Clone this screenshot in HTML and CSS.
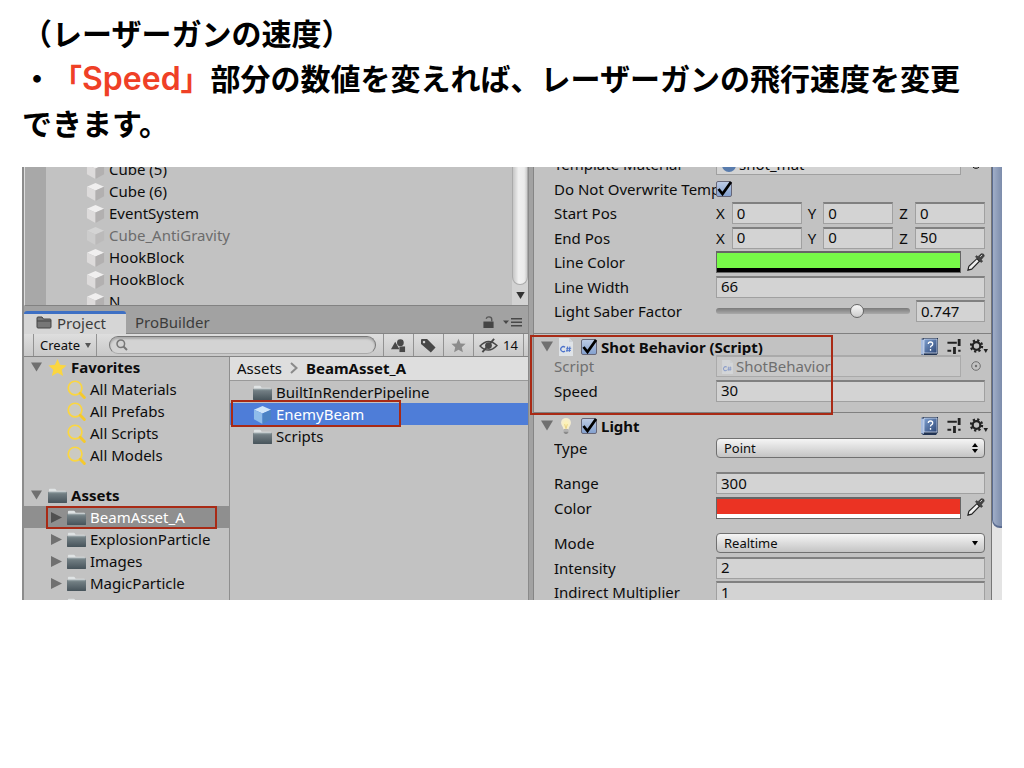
FILE: index.html
```html
<!DOCTYPE html>
<html lang="ja">
<head>
<meta charset="utf-8">
<title>レーザーガンの速度</title>
<link rel="stylesheet" href="styles.css">
</head>
<body>
<svg class="defs" aria-hidden="true">
  <defs>
    <linearGradient id="g-folder" x1="0" y1="0" x2="0" y2="1"><stop offset="0" stop-color="#7b878c"/><stop offset="1" stop-color="#46535a"/></linearGradient>
    <linearGradient id="g-book" x1="0" y1="0" x2="1" y2="1"><stop offset="0" stop-color="#7fa0d0"/><stop offset="1" stop-color="#2c4676"/></linearGradient>
    <radialGradient id="g-bulb"><stop offset="0" stop-color="#fff3b0"/><stop offset="1" stop-color="#f3ecd2"/></radialGradient>
  </defs>
  <symbol id="cube" viewBox="0 0 20 20"><path d="M1 5 10 1l9 4-9 4z" fill="#f0efef"/><path d="M1 5l9 4v11l-9-5z" fill="#dddbdb"/><path d="M19 5l-9 4v11l9-5z" fill="#b2b0b0"/></symbol>
  <symbol id="prefab" viewBox="0 0 20 20"><path d="M1 5 10 1l9 4-9 4z" fill="#cfe6fa"/><path d="M1 5l9 4v11l-9-5z" fill="#8fbdea"/><path d="M19 5l-9 4v11l9-5z" fill="#4b83c4"/></symbol>
  <symbol id="folder" viewBox="0 0 20 16"><path d="M1 4V2q0-1 1-1h5q1 0 1.500 1L9 3h9q1 0 1 1v2H1z" fill="#dfe3e4"/><path d="M0 5q0-1 1-1h18q1 0 1 1v10q0 1-1 1H1q-1 0-1-1z" fill="url(#g-folder)"/><path d="M1 5h18" stroke="#98a2a6"/></symbol>
  <symbol id="star" viewBox="0 0 20 20"><path d="M10 1l2.700 6.200 6.800.6-5.100 4.500 1.500 6.700-5.900-3.500L4.100 19l1.500-6.700L.5 7.800l6.800-.6z"/></symbol>
  <symbol id="lens" viewBox="0 0 20 20"><circle cx="8.500" cy="8.500" r="7.200" fill="#cbcac2" stroke="#fbd640" stroke-width="1.800"/><path d="M14 14l4.300 4.500" stroke="#f5c92c" stroke-width="3" stroke-linecap="round"/></symbol>
  <symbol id="down" viewBox="0 0 12 10"><path d="M0 0h12L6 10z"/></symbol>
  <symbol id="right" viewBox="0 0 12 12"><path d="M0 0l12 6-12 6z"/></symbol>
  <symbol id="check" viewBox="0 0 18 18"><path d="M3.500 9l4 5L16 2" fill="none" stroke="#000" stroke-width="2.800"/></symbol>
  <symbol id="csharp" viewBox="0 0 14 18"><path d="M0 0h10l4 4v14H0z" fill="#dfe3e7"/><path d="M10 0v4h4" fill="#cfd4da"/><path d="M6 9.300A2.500 2.500 0 1 0 6 13" fill="none" stroke="#4d73cb" stroke-width="1.300"/><path d="M8.600 8.500l-.7 5.500m3-5.500l-.7 5.500M7.200 10.300h5m-5.200 2h5" stroke="#4d73cb" fill="none"/></symbol>
  <symbol id="bulb" viewBox="0 0 14 20"><path d="M7 1a5.500 5.500 0 0 1 5.500 5.500c0 3-2.500 4-2.700 7.500H4.200C4 10.500 1.500 9.500 1.500 6.500A5.500 5.500 0 0 1 7 1z" fill="url(#g-bulb)"/><path d="M5.500 8L7 13l1.500-5" fill="none" stroke="#e6cf7a"/><path d="M4.500 14h5v3.500L8 19H6l-1.500-1.500z" fill="#8b8b8b"/><path d="M4.500 15.500h5" stroke="#ddd"/></symbol>
  <symbol id="book" viewBox="0 0 18 19"><path d="M1 2l3-1h14v15l-2 3H3l-2-2z" fill="#213352"/><path d="M1 2l3 1v15l-3-1z" fill="#a7bcdf"/><path d="M4 2h13v14H4z" fill="url(#g-book)" stroke="#dfe7f5" stroke-width=".7"/><path d="M8.300 7q0-2 2.200-2t2.200 2q0 1.200-1.300 1.800-.9.500-.9 1.700M10.500 12v1.700" fill="none" stroke="#fff" stroke-width="1.300"/></symbol>
  <symbol id="preset" viewBox="0 0 14 16"><path d="M0 4h10M0 12.500h4M11.500 12.500H14" stroke="#222" stroke-width="2.200" fill="none"/><path d="M12.500 0v7.500M7.500 8.500V16" stroke="#222" stroke-width="3" fill="none"/></symbol>
  <symbol id="gear" viewBox="0 0 18 16"><circle cx="6.500" cy="7" r="3.800" fill="none" stroke="#222" stroke-width="2.200"/><circle cx="6.500" cy="7" r="5.600" fill="none" stroke="#222" stroke-width="2.200" stroke-dasharray="2.200 2.200"/><path d="M13.500 10H18l-2.200 4z" fill="#222"/></symbol>
  <symbol id="dropper" viewBox="0 0 20 20"><path d="M2 18l1-4 8.500-8 2.700 2.700L6 17z" fill="#eee" stroke="#222" stroke-width="1.200"/><path d="M10 4l6 6 1.500-1.500-1.500-1.500 3-3.500q.6-2-1-2.500-2-.8-3 .5L12.500 4 11.200 2.700z" fill="#454545" stroke="#222" stroke-width=".6"/><path d="M15 4l2-2" stroke="#ddd"/></symbol>
  <symbol id="picker" viewBox="0 0 10 10"><circle cx="5" cy="5" r="4.300" fill="none" stroke="currentColor"/><circle cx="5" cy="5" r="1.200" fill="currentColor"/></symbol>
</svg>

<h1 class="lesson">（レーザーガンの速度）<br>・<em>「<span class="latin">Speed</span>」</em>部分の数値を変えれば、レーザーガンの飛行速度を変更できます。</h1>

<main class="editor">
  <section class="left">
    <div class="hierarchy">
      <ul class="objects">
        <li><svg><use href="#cube"/></svg>Cube (5)</li>
        <li><svg><use href="#cube"/></svg>Cube (6)</li>
        <li><svg><use href="#cube"/></svg>EventSystem</li>
        <li class="inactive"><svg><use href="#cube"/></svg>Cube_AntiGravity</li>
        <li><svg><use href="#cube"/></svg>HookBlock</li>
        <li><svg><use href="#cube"/></svg>HookBlock</li>
        <li><svg><use href="#cube"/></svg>N</li>
      </ul>
      <div class="vscroll"><span class="vthumb"></span><button class="vdown" aria-label="Scroll down"><svg><use href="#down"/></svg></button></div>
    </div>

    <nav class="tabs">
      <button class="tab active"><svg class="tab-icon" viewBox="0 0 16 13"><path d="M1 4V2q0-1 1-1h4l1.500 2H14q1 0 1 1v7q0 1-1 1H2q-1 0-1-1z" fill="#777" stroke="#444"/><path d="M1 5h14" stroke="#444"/></svg>Project</button>
      <button class="tab">ProBuilder</button>
      <button class="lock" aria-label="Lock"><svg viewBox="0 0 11 13"><path d="M0 6h11v7H0z" fill="#454545"/><path d="M9 6V3.500Q9 1 6 1 3.500 1 3 3" fill="none" stroke="#555" stroke-width="1.500"/></svg></button>
      <button class="menu" aria-label="Panel menu"><svg viewBox="0 0 19 9"><path d="M0 2.500h6L3 6zM8 0h11v1.500H8zm0 3.500h11V5H8zM8 7h11v1.500H8z" fill="#484848"/></svg></button>
    </nav>

    <div class="toolbar">
      <button class="create">Create <svg><use href="#down"/></svg></button>
      <label class="search"><svg viewBox="0 0 12 12"><circle cx="4.800" cy="4.800" r="3.800" fill="none" stroke="#777" stroke-width="1.500"/><path d="M7.500 7.500L11 11" stroke="#777" stroke-width="2"/></svg><input type="search" aria-label="Search"></label>
      <button class="tool" aria-label="Filter by type"><svg viewBox="0 0 16 16"><circle cx="10" cy="5" r="3.600"/><path d="M0 12L4.500 4 9 12z"/><path d="M9 9h6v6H9z"/></svg></button>
      <button class="tool" aria-label="Filter by label"><svg viewBox="0 0 16 16"><path fill-rule="evenodd" d="M0 2q0-1 1-1h5.500l9 9-5 5.500L0 6.500zM3.200 3a1.300 1.300 0 1 0 .1 0z"/></svg></button>
      <button class="tool faded" aria-label="Save search"><svg><use href="#star"/></svg></button>
      <button class="tool hidden-count" aria-label="Hidden packages"><svg viewBox="0 0 20 16"><path d="M1 8.500Q10-1 19 8q-9 9.500-18 .5z" fill="none" stroke="#484848" stroke-width="1.600"/><circle cx="10" cy="8" r="3.600"/><path d="M3.500 15L16 1" stroke="#484848" stroke-width="2"/></svg>14</button>
    </div>

    <div class="project">
      <div class="tree">
        <ul class="rows">
          <li class="root"><svg class="fold"><use href="#down"/></svg><svg class="icon gold"><use href="#star"/></svg>Favorites</li>
          <li class="leaf"><svg class="icon"><use href="#lens"/></svg>All Materials</li>
          <li class="leaf"><svg class="icon"><use href="#lens"/></svg>All Prefabs</li>
          <li class="leaf"><svg class="icon"><use href="#lens"/></svg>All Scripts</li>
          <li class="leaf"><svg class="icon"><use href="#lens"/></svg>All Models</li>
        </ul>
        <ul class="rows">
          <li class="root"><svg class="fold"><use href="#down"/></svg><svg class="icon"><use href="#folder"/></svg>Assets</li>
          <li class="branch selected"><svg class="fold"><use href="#right"/></svg><svg class="icon"><use href="#folder"/></svg>BeamAsset_A<span class="mark mark-folder"></span></li>
          <li class="branch"><svg class="fold"><use href="#right"/></svg><svg class="icon"><use href="#folder"/></svg>ExplosionParticle</li>
          <li class="branch"><svg class="fold"><use href="#right"/></svg><svg class="icon"><use href="#folder"/></svg>Images</li>
          <li class="branch"><svg class="fold"><use href="#right"/></svg><svg class="icon"><use href="#folder"/></svg>MagicParticle</li>
          <li class="branch"><svg class="fold"><use href="#right"/></svg><svg class="icon"><use href="#folder"/></svg>Prefabs</li>
        </ul>
      </div>
      <div class="browser">
        <div class="crumbs"><span>Assets</span><svg viewBox="0 0 8 12"><path d="M1 1l5.500 5L1 11" fill="none" stroke="#8a8a8a" stroke-width="2"/></svg><b>BeamAsset_A</b></div>
        <ul class="files">
          <li><svg class="icon"><use href="#folder"/></svg>BuiltInRenderPipeline</li>
          <li class="picked"><svg class="icon"><use href="#prefab"/></svg>EnemyBeam<span class="mark mark-file"></span></li>
          <li><svg class="icon"><use href="#folder"/></svg>Scripts</li>
        </ul>
      </div>
    </div>
  </section>

  <section class="inspector">
    <div class="components">
      <div class="component scrolled">
        <div class="row"><label for="mat">Template Material</label><span class="object"><span class="ball"></span><input id="mat" value="shot_mat" readonly></span><button class="pick" aria-label="Pick material"><svg><use href="#picker"/></svg></button></div>
        <div class="row"><label for="over">Do Not Overwrite Template</label><span class="tick"><input type="checkbox" id="over" checked><svg><use href="#check"/></svg></span></div>
        <div class="row"><span class="name">Start Pos</span><span class="vector"><label>X<input value="0"></label><label>Y<input value="0"></label><label>Z<input value="0"></label></span></div>
        <div class="row"><span class="name">End Pos</span><span class="vector"><label>X<input value="0"></label><label>Y<input value="0"></label><label>Z<input value="50"></label></span></div>
        <div class="row"><span class="name">Line Color</span><button class="swatch green" aria-label="Line Color"></button><button class="drop" aria-label="Pick color"><svg><use href="#dropper"/></svg></button></div>
        <div class="row"><label for="lw">Line Width</label><input id="lw" class="field" value="66"></div>
        <div class="row"><label for="lsf">Light Saber Factor</label><input type="range" id="lsf" min="0" max="1" step="0.001" value="0.747"><input class="field factor" aria-label="Light Saber Factor value" value="0.747"></div>
      </div>

      <div class="component">
        <span class="mark mark-script"></span>
        <div class="head"><svg class="fold"><use href="#down"/></svg><svg class="kind"><use href="#csharp"/></svg><span class="tick"><input type="checkbox" id="shot" checked><svg><use href="#check"/></svg></span><label for="shot">Shot Behavior (Script)</label><button aria-label="Help"><svg class="book"><use href="#book"/></svg></button><button aria-label="Presets"><svg class="preset"><use href="#preset"/></svg></button><button aria-label="Options"><svg class="gear"><use href="#gear"/></svg></button></div>
        <div class="row disabled"><label for="scr">Script</label><span class="object"><svg class="doc"><use href="#csharp"/></svg><input id="scr" value="ShotBehavior" readonly></span><button class="pick" aria-label="Pick script"><svg><use href="#picker"/></svg></button></div>
        <div class="row"><label for="spd">Speed</label><input id="spd" class="field" value="30"></div>
      </div>

      <div class="component">
        <div class="head"><svg class="fold"><use href="#down"/></svg><svg class="kind"><use href="#bulb"/></svg><span class="tick"><input type="checkbox" id="light" checked><svg><use href="#check"/></svg></span><label for="light">Light</label><button aria-label="Help"><svg class="book"><use href="#book"/></svg></button><button aria-label="Presets"><svg class="preset"><use href="#preset"/></svg></button><button aria-label="Options"><svg class="gear"><use href="#gear"/></svg></button></div>
        <div class="group first">
          <div class="row"><label for="type">Type</label><span class="choice"><select id="type"><option>Point</option></select><svg viewBox="0 0 6 10"><path d="M3 0l3 4H0zM0 6h6l-3 4z"/></svg></span></div>
        </div>
        <div class="group">
          <div class="row"><label for="range">Range</label><input id="range" class="field" value="300"></div>
          <div class="row"><span class="name">Color</span><button class="swatch red" aria-label="Color"></button><button class="drop" aria-label="Pick color"><svg><use href="#dropper"/></svg></button></div>
        </div>
        <div class="group">
          <div class="row"><label for="mode">Mode</label><span class="choice"><select id="mode"><option>Realtime</option></select><svg viewBox="0 0 6 10"><path d="M0 3h6L3 7.500z"/></svg></span></div>
          <div class="row"><label for="int">Intensity</label><input id="int" class="field" value="2"></div>
          <div class="row"><label for="ind">Indirect Multiplier</label><input id="ind" class="field" value="1"></div>
        </div>
      </div>
    </div>
    <div class="side-scroll"><span></span></div>
  </section>
</main>
</body>
</html>
```

FILE: styles.css
```css
* { box-sizing: border-box; }

body {
  margin: 0;
  padding: 10px 22px;
  background: #fff;
  color: #0c0c0c;
  font-family: "Noto Sans", "Open Sans", sans-serif;
  font-size: 15px;
  line-height: 22px;
}

ul { list-style: none; margin: 0; padding: 0; }
svg { display: block; flex: none; overflow: visible; }
button, input, select { font: inherit; color: inherit; margin: 0; padding: 0; border: 0; background: none; border-radius: 0; min-width: 0; }
.defs { position: absolute; width: 0; height: 0; }

.lesson {
  margin: 0 0 22px;
  padding-right: 36px;
  color: #000;
  font: bold 30px/45px "Noto Sans CJK JP", sans-serif;
  text-spacing-trim: space-all;
}
.lesson em { color: #ef4026; font-style: normal; }
.latin { font-family: Inter, sans-serif; font-size: 32px; font-weight: 600; line-height: 1; }

.editor {
  display: grid;
  grid-template-columns: 507fr 473fr;
  aspect-ratio: 980 / 433;
  overflow: hidden;
  background: #c2c2c2;
}

.mark { position: absolute; border: 2px solid #a92a15; pointer-events: none; z-index: 2; }

/* Left column */
.left { display: flex; flex-direction: column; min-width: 0; min-height: 0; overflow: hidden; border-left: 2px solid #8c8c8c; border-right: 1px solid #8a8a8a; }

.hierarchy { display: flex; flex: none; height: 139px; overflow: hidden; border-left: 1px solid #ddd; border-bottom: 1px solid #828282; }
.objects { flex: 1; margin-top: -9px; border-left: 21px solid #a8a8a8; padding-left: 40px; }
.objects li { display: flex; align-items: center; gap: 4px; height: 22px; }
.objects svg { width: 19px; height: 19px; }
.inactive { color: #6c6c6c; }
.inactive svg { opacity: .4; }
.vscroll { display: flex; flex-direction: column; width: 16px; background: #d2d2d2; }
.vthumb { flex: 1; border: 1px solid #aaa; border-top: 0; border-radius: 0 0 8px 8px; background: linear-gradient(90deg, #c6c6c6, #f0f0f0 40%, #ececec 80%, #ccc); }
.vdown { display: flex; align-items: center; justify-content: center; height: 20px; }
.vdown svg { width: 9px; height: 7px; fill: #333; }

.tabs { display: flex; flex: none; align-items: flex-end; height: 28px; background: #a2a2a2; border-bottom: 1px solid #858585; color: #3c3c3c; }
.tab { height: 22px; padding: 0 9px; line-height: 20px; }
.tab.active { display: flex; align-items: center; gap: 5px; height: 23px; padding: 0 20px 3px 12px; margin-bottom: -1px; border-top: 3px solid #3e70c4; border-radius: 3px 3px 0 0; background: #d6d6d6; }
.tab-icon { width: 16px; height: 13px; }
.lock { margin-left: auto; padding: 0 9px 5px 0; }
.lock svg { width: 11px; height: 12px; }
.menu { padding: 0 6px 6px 0; }
.menu svg { width: 19px; height: 9px; }

.toolbar { display: flex; flex: none; align-items: stretch; height: 23px; padding: 0 4px 0 9px; border-bottom: 1px solid #858585; background: linear-gradient(#dedede, #c8c8c8); }
.create { display: flex; align-items: center; gap: 5px; padding: 0 5px 0 6px; border: solid #929292; border-width: 0 1px; font-size: 13px; }
.create svg { width: 6px; height: 5px; fill: #555; }
.search { display: flex; flex: 1; align-items: center; gap: 4px; margin: 2px 7px 2px 12px; padding: 0 6px; border: 1px solid #777; border-bottom-color: #aaa; border-radius: 10px; background: #d3d3d3; box-shadow: inset 0 2px 2px #aaa; }
.search svg { width: 12px; height: 12px; }
.search input { flex: 1; outline: 0; appearance: none; height: 16px; }
.tool { display: flex; align-items: center; justify-content: center; width: 30px; border-left: 1px solid #929292; }
.tool svg { width: 15px; height: 15px; fill: #484848; }
.tool.faded svg { fill: #8c8c8c; }
.tool.hidden-count { gap: 5px; width: 51px; border-right: 1px solid #929292; font-size: 13px; }
.hidden-count svg { width: 19px; }

.project { display: grid; grid-template-columns: 206fr 298fr; flex: 1; min-height: 0; }
.tree { min-width: 0; border-right: 1px solid #8f8f8f; overflow: hidden; }
.rows:first-child { margin-top: -1px; }
.rows + .rows { margin-top: 18px; }
.rows li { display: flex; align-items: center; position: relative; height: 22px; gap: 4px; white-space: nowrap; }
.icon { width: 19px; height: 19px; }
.gold { fill: #fbd640; }
.fold { fill: #707070; width: 11px; height: 10px; }
.root { padding-left: 7px; font-weight: bold; }
.root .fold { margin-right: 2px; }
.leaf { padding-left: 43px; }
.branch { padding-left: 27px; }
.branch .fold { margin-right: 1px; height: 11px; }
.rows .selected { background: #8f8f8f; color: #fff; }
.selected .fold { fill: #505050; }
.mark-folder { inset: 0 12px -1px 22px; }

.browser { min-width: 0; }
.crumbs { display: flex; align-items: center; gap: 8px; height: 24px; padding: 0 7px 2px; border-bottom: 1px solid #999; background: #dedede; }
.crumbs svg { width: 8px; height: 12px; }
.files li { display: flex; align-items: center; gap: 4px; position: relative; height: 22px; padding-left: 23px; }
.picked { background: #4e7dd8; color: #fff; }
.mark-file { left: 1px; right: 127px; top: -3px; bottom: -2px; }

/* Inspector */
.inspector { display: flex; min-width: 0; min-height: 0; border-left: 4px solid #a2a2a2; }
.components { flex: 1; min-width: 0; border-left: 1px solid #858585; }
.component { position: relative; padding-bottom: 9px; border-bottom: 1px solid #808080; }
.scrolled { margin-top: -15px; padding-bottom: 10px; }
.row { display: flex; align-items: center; height: 24px; padding: 0 6px 0 20px; white-space: nowrap; }
.row:nth-child(even) { height: 25px; }
.row > label, .name { flex: none; width: 162px; overflow: hidden; }
.field, .vector input, .object { height: 22px; border: 1px solid #a0a0a0; border-top: 2px solid #808080; background: #d3d3d3; }
.field { flex: 1; padding: 0 4px 2px; }
.object { display: flex; flex: 1; align-items: center; gap: 3px; padding: 0 5px; min-width: 0; }
.object input { flex: 1; height: 18px; padding-bottom: 2px; }
.ball { width: 14px; height: 14px; border-radius: 50%; background: #597cad; }
.doc { width: 11px; height: 14px; opacity: .5; }
.pick, .drop { display: flex; align-items: center; justify-content: center; width: 24px; }
.pick { padding-left: 6px; }
.pick svg { width: 10px; height: 10px; }
.drop { padding-left: 4px; }
.drop svg { width: 19px; height: 19px; }
.vector { display: grid; flex: 1; grid-template-columns: repeat(3, 1fr); gap: 6px; min-width: 0; }
.vector label { display: flex; align-items: center; min-width: 0; }
.vector input { flex: 1; margin-left: 7px; padding: 0 4px 2px; width: 0; }
.swatch { flex: 1; height: 22px; border: 1px solid #666; border-top: 2px solid #666; }
.green { background: linear-gradient(#77fa48 15px, #000 15px); }
.red { background: linear-gradient(#eb3323 15px, #fff 15px); }

input[type="range"] { flex: 1; appearance: none; height: 14px; margin-right: 6px; }
input[type="range"]::-webkit-slider-runnable-track { height: 6px; border-radius: 3px; background: linear-gradient(#7a7a7a, #aaa); }
input[type="range"]::-webkit-slider-thumb { appearance: none; width: 14px; height: 14px; margin-top: -4px; border: 1px solid #666; border-radius: 50%; background: linear-gradient(#f8f8f8, #ccc); }
.field.factor { flex: none; width: 69px; }

.tick { position: relative; display: block; width: 16px; height: 16px; }
.tick input { display: block; appearance: none; width: 16px; height: 16px; border: 1px solid #667; border-radius: 2px; background: linear-gradient(#bccbe4, #84a1cf); }
.tick svg { position: absolute; inset: -1px; width: 18px; height: 18px; pointer-events: none; }

.head { display: flex; align-items: center; height: 20px; padding: 5px 3px 0 7px; }
.head .fold { width: 12px; height: 11px; }
.kind { width: 14px; height: 18px; margin: 0 8px 0 6px; }
.head label { flex: 1; padding-left: 4px; font-weight: bold; white-space: nowrap; }
.head button { margin-left: 9px; }
.book { width: 18px; height: 19px; }
.preset { width: 14px; height: 15px; }
.gear { width: 18px; height: 16px; }
.disabled { color: #6f6f6f; }
.disabled .object { border-color: #aaa; background: #c8c8c8; }
.mark-script { inset: 1px 158px -3px -4px; }

.group { margin-top: 11px; }
.group.first { margin-top: 3px; }
.choice { position: relative; flex: 1; display: flex; }
.choice select { flex: 1; appearance: none; height: 20px; padding: 0 7px; border: 1px solid #707070; border-radius: 4px; background: linear-gradient(#f5f5f5, #c4c4c4); font-size: 13px; line-height: 18px; }
.choice svg { position: absolute; right: 7px; top: 5px; width: 6px; height: 10px; pointer-events: none; }

.side-scroll { flex: none; width: 11px; border-left: 1px solid #777; background: #e4e4e4; }
.side-scroll span { display: block; height: 361px; border: solid #5b6c90; border-width: 0 0 2px 1px; border-radius: 0 0 0 8px; background: linear-gradient(90deg, #a0aec8, #7c8cab); }
```
